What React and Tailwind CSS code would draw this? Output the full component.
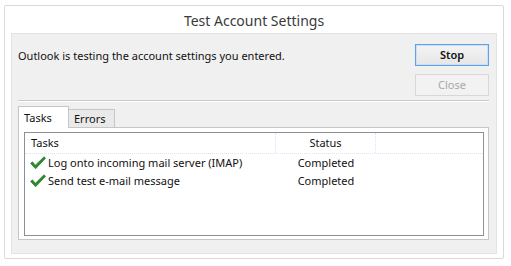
import React from 'react';

const font = { fontFamily: '"Noto Sans", "Open Sans", sans-serif' };

const Check = () => (
  <svg width="16" height="14" viewBox="0 0 16 14" className="shrink-0">
    <path d="M0.6 7.4 L2.4 5.8 L5.4 9.2 L14 0.8 L15.6 2.2 L5.6 12.8 Z" fill="#2c8a2c" stroke="#1d6e1d" strokeWidth="0.6" strokeLinejoin="round" />
  </svg>
);

const tasks = [
  { name: 'Log onto incoming mail server (IMAP)', status: 'Completed' },
  { name: 'Send test e-mail message', status: 'Completed' },
];

export default function App() {
  return (
    <div className="w-[511px] h-[266px] bg-white pt-[5px] pl-[4px]" style={font}>
      {/* Window */}
      <div className="w-[500px] h-[254px] border border-[#d9d9d9] rounded-[2px] bg-white flex flex-col px-[6px] pb-[4px]">
        <div className="h-[27px] flex items-center justify-center text-[14px] text-[#3a3a3a] pt-[2px]">
          Test Account Settings
        </div>

        {/* Gray panel */}
        <div className="flex-1 bg-[#f0f0f0] border border-[#e3e3e3] flex flex-col pl-[6px] pr-[7px] pt-[10px] pb-[13px]">
          <div className="flex justify-between">
            <div className="text-[11px] text-[#111] pt-[4px]">Outlook is testing the account settings you entered.</div>
            <div className="flex flex-col gap-[8px]">
              <button className="w-[74px] h-[22px] border border-[#5ea2e6] bg-gradient-to-b from-[#f4f4f4] to-[#e6e6e6] text-[11px] font-semibold text-[#111] shadow-[inset_0_0_0_1px_#c8e0f8]">
                Stop
              </button>
              <button className="w-[74px] h-[22px] border border-[#d8d8d8] bg-[#f2f2f2] text-[11px] text-[#a8a8a8]">
                Close
              </button>
            </div>
          </div>

          <div className="mt-[4px] h-[2px] border-t border-[#c9c9c9] border-b border-b-white" />

          {/* Tabs */}
          <div className="mt-[4px] flex items-end text-[11px]">
            <div className="h-[22px] w-[51px] border border-[#c6c6c6] border-b-0 bg-white text-[#111] pl-[5px] pt-[3px] relative z-10 -mb-px">
              Tasks
            </div>
            <div className="h-[18px] w-[46px] border border-[#c6c6c6] border-l-0 border-b-0 bg-[#e9e9e9] text-[#111] pl-[5px] leading-[18px]">
              Errors
            </div>
          </div>

          <div className="flex-1 border border-[#c6c6c6] bg-white pl-[5px] pr-[4px] pt-[4px] pb-[3px] flex">
            {/* List view */}
            <div className="flex-1 border border-[#8d9096] bg-white text-[11px] text-[#111]">
              <div className="flex h-[21px] items-center border-b border-dotted border-[#d6e7f5]">
                <div className="w-[251px] pl-[6px] border-r border-dotted border-[#d6e7f5] h-full flex items-center">Tasks</div>
                <div className="w-[100px] text-center border-r border-dotted border-[#d6e7f5] h-full flex items-center justify-center">Status</div>
              </div>
              {tasks.map((t, i) => (
                <div key={i} className="flex h-[18px] items-center">
                  <div className="w-[251px] pl-[5px] flex items-center gap-[2px]">
                    <Check />
                    <span>{t.name}</span>
                  </div>
                  <div className="w-[100px] text-center">{t.status}</div>
                </div>
              ))}
            </div>
          </div>
        </div>
      </div>
    </div>
  );
}
